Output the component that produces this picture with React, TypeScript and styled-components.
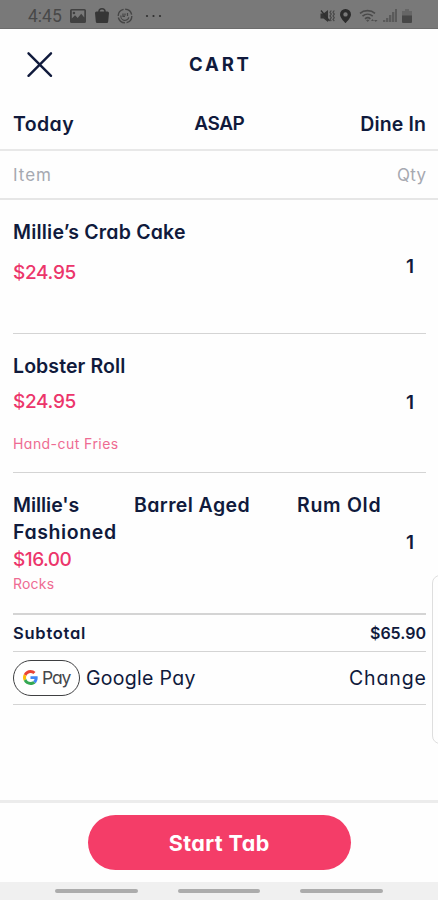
import React from 'react';
import styled, { createGlobalStyle } from 'styled-components';

const GlobalStyle = createGlobalStyle`
  * { box-sizing: border-box; }
  body { margin: 0; background: #fefefe; }
`;

const navy = '#101a3c';
const pink = '#ec356b';

const Screen = styled.div`
  position: relative;
  width: 438px;
  height: 900px;
  display: flex;
  flex-direction: column;
  overflow: hidden;
  background: #fefefe;
  color: ${navy};
  font-family: Inter, 'Open Sans', sans-serif;
  font-feature-settings: 'cv11';
`;

const StatusBar = styled.div`
  height: 29px;
  flex: none;
  display: flex;
  align-items: center;
  justify-content: space-between;
  padding: 3px 26px 0 28px;
  background: #797979;
  border-bottom: 1px solid #6c6c6c;
`;

const StatusGroup = styled.div<{ $gap: number }>`
  display: flex;
  align-items: center;
  gap: ${p => p.$gap}px;
`;

const Clock = styled.span`
  width: 34px;
  color: #484848;
  font: 400 17.5px/20px Roboto, sans-serif;
  white-space: nowrap;
`;

const Icon = styled.svg<{ $after?: number }>`
  display: block;
  flex: none;
  margin-right: ${p => p.$after ?? 0}px;
`;

const Label = styled.span<{ $size?: number; $weight?: number; $spacing?: number; $line?: number; $color?: string }>`
  display: block;
  white-space: nowrap;
  font-size: ${p => p.$size ?? 19.5}px;
  font-weight: ${p => p.$weight ?? 570};
  letter-spacing: ${p => p.$spacing ?? 0}px;
  margin-right: ${p => -(p.$spacing ?? 0)}px;
  line-height: ${p => p.$line ?? 28}px;
  color: ${p => p.$color ?? 'inherit'};
`;

const Header = styled.header`
  height: 70px;
  flex: none;
  display: grid;
  grid-template-columns: 1fr auto 1fr;
  align-items: center;
  padding: 0 26px;
`;

const CloseButton = styled.button`
  width: 27px;
  height: 27px;
  padding: 0;
  border: 0;
  background: none;
`;

const Tabs = styled.nav`
  height: 52px;
  flex: none;
  display: grid;
  grid-template-columns: 1fr auto 1fr;
  padding: 11px 12px 0 13px;
  border-bottom: 2px solid #e8e8e8;
  > :last-child { justify-self: end; }
`;

const ColumnHead = styled.div`
  height: 49px;
  flex: none;
  display: flex;
  justify-content: space-between;
  padding: 10px 12px 0 13px;
  border-bottom: 2px solid #e6e6e6;
`;

const Content = styled.main`
  flex: 1;
  padding: 0 12px 0 13px;
`;

const Item = styled.section<{ $height: number; $top: number; $rule?: number }>`
  height: ${p => p.$height}px;
  padding-top: ${p => p.$top}px;
  display: flex;
  justify-content: space-between;
  border-bottom: ${p => p.$rule ?? 1}px solid #d4d4d4;
`;

const Details = styled.div`
  display: flex;
  flex-direction: column;
`;

const NameRow = styled.div`
  display: flex;
`;

const NamePart = styled.div<{ $width: number }>`
  width: ${p => p.$width}px;
`;

const Price = styled(Label)<{ $top: number }>`
  margin-top: ${p => p.$top}px;
  font-size: 19px;
  font-weight: 470;
  color: ${pink};
`;

const Modifier = styled(Label)<{ $top: number }>`
  margin-top: ${p => p.$top}px;
  font-size: 14px;
  font-weight: 400;
  line-height: 20px;
  color: #ee6b92;
`;

const Quantity = styled(Label)<{ $top: number }>`
  margin: ${p => p.$top}px 12px 0 0;
  font-size: 19px;
`;

const SummaryRow = styled.div<{ $height: number }>`
  height: ${p => p.$height}px;
  display: flex;
  align-items: center;
  justify-content: space-between;
  padding-bottom: 1px;
  border-bottom: 1px solid #d4d4d4;
`;

const Payment = styled.div`
  display: flex;
  align-items: center;
  gap: 6px;
`;

const PayBadge = styled.div`
  width: 67px;
  height: 36px;
  display: flex;
  align-items: center;
  gap: 4px;
  padding-left: 9px;
  border: 1.3px solid #3f4042;
  border-radius: 18px;
  background: #fff;
`;

const Footer = styled.footer`
  height: 82px;
  flex: none;
  display: flex;
  justify-content: center;
  padding-top: 12px;
  border-top: 3px solid #ececec;
`;

const StartButton = styled.button`
  width: 263px;
  height: 55px;
  display: flex;
  align-items: center;
  justify-content: center;
  padding: 0;
  border: 0;
  border-radius: 28px;
  background: #f43d68;
  color: #fff;
  font-family: inherit;
  font-feature-settings: inherit;
`;

const NavBar = styled.div`
  height: 18px;
  flex: none;
  display: flex;
  justify-content: center;
  gap: 40px;
  padding-top: 7px;
  background: #f0f0f0;
`;

const NavHandle = styled.span`
  width: 82.5px;
  height: 4px;
  border-radius: 2px;
  background: #acacac;
`;

const EdgePanel = styled.aside`
  position: absolute;
  top: 575px;
  right: -12px;
  width: 18px;
  height: 169px;
  border: 1.5px solid #dedede;
  border-radius: 8px;
  background: #fefefe;
`;

export default function App() {
  return (
    <>
      <GlobalStyle />
      <Screen>
        <StatusBar>
          <StatusGroup $gap={8}>
            <Clock>4:45</Clock>
            <Icon width="16" height="14" viewBox="0 0 15 14" preserveAspectRatio="none" $after={1}>
              <path fill="#414141" fillRule="evenodd" d="M1.500 0h12A1.500 1.500 0 0 1 15 1.500v11a1.500 1.500 0 0 1-1.500 1.500h-12A1.500 1.500 0 0 1 0 12.500v-11A1.500 1.500 0 0 1 1.500 0ZM1.700 1.600v8l3-3.400 2.500 2.700 3.300-4.200 2.900 3.800V1.600ZM3.700 2.800a1.200 1.200 0 1 1 0 2.400 1.200 1.200 0 0 1 0-2.400Z" />
            </Icon>
            <Icon width="14" height="15" viewBox="0 0 14 15">
              <path fill="none" stroke="#3a3a3a" strokeWidth="1.600" d="M4 5V3.500a3 2.700 0 0 1 6 0V5" />
              <path fill="#363636" d="M1.500 3.500h11A1.500 1.500 0 0 1 14 5l-.8 8.500A1.500 1.500 0 0 1 11.700 15H2.300a1.500 1.500 0 0 1-1.500-1.500L0 5a1.500 1.500 0 0 1 1.500-1.500Z" />
            </Icon>
            <Icon width="16" height="16" viewBox="0 0 16 16" fill="none" stroke="#454545" $after={4}>
              <circle cx="8" cy="8" r="6.800" strokeWidth="1.400" strokeDasharray="9 1.680" />
              <path strokeWidth="1.200" d="M4 7.500a4 4 0 0 0 7.800 1.800M6 5.500v2.800h2M8 5.500v2M10.500 5v3" />
            </Icon>
            <Icon width="17" height="4" viewBox="0 0 17 4" fill="#303030">
              <circle cx="2" cy="2" r="1.100" /><circle cx="8.500" cy="2" r="1.100" /><circle cx="15" cy="2" r="1.100" />
            </Icon>
          </StatusGroup>
          <StatusGroup $gap={5}>
            <Icon width="15" height="14" viewBox="0 0 15 14">
              <path fill="#353535" d="M.5 4.500h3L8 1v12L3.500 9.500h-3Z" />
              <path stroke="#303030" strokeWidth="1.300" fill="none" d="M1 1.500 9.500 12" />
              <path stroke="#484848" strokeWidth="1.200" fill="none" d="m11.300 1.500-1.300 1.800 1.300 1.800-1.300 1.800 1.300 1.800-1.300 1.800 1.300 1.500M14.300 1.500 13 3.300l1.300 1.800L13 6.900l1.300 1.800-1.300 1.800 1.300 1.500" />
            </Icon>
            <Icon width="11" height="14" viewBox="0 0 11 14" $after={3}>
              <path fill="#2c2c2c" fillRule="evenodd" d="M5.500 0A5.400 5.400 0 0 1 11 5.400C11 9 5.500 14 5.500 14S0 9 0 5.400A5.400 5.400 0 0 1 5.500 0Zm0 3.200a2.200 2.200 0 1 0 0 4.400 2.200 2.200 0 0 0 0-4.400Z" />
            </Icon>
            <Icon width="19" height="14" viewBox="0 0 19 14">
              <path fill="none" stroke="#4a4a4a" strokeWidth="1.600" d="M1 4.300c4-3.600 11-3.600 15 0M3.500 7.200c3-2.600 7.200-2.600 10.200 0M6 9.800c1.800-1.500 3.600-1.500 5.400 0" />
              <path fill="#505050" d="m8.700 13 1.600-1.700a2.300 2.300 0 0 0-3.200 0ZM12 12l1.500-2 1.500 2ZM15 11h3.500l-1.700 2Z" />
            </Icon>
            <Icon width="14" height="13" viewBox="0 0 14 13" fill="#5a5a5a">
              <path d="M0 11h2.300v2H0ZM3 9h2.300v4H3ZM6 6h2.300v7H6ZM9 3h2.300v10H9ZM12 0h2v13h-2Z" />
            </Icon>
            <Icon width="10" height="14" viewBox="0 0 10 14">
              <path fill="#666" d="M3 0h4v2h3v5H0V2h3Z" />
              <path fill="#474747" d="M0 6.500h10V13a1 1 0 0 1-1 1H1a1 1 0 0 1-1-1Z" />
            </Icon>
          </StatusGroup>
        </StatusBar>

        <Header>
          <CloseButton aria-label="Close">
            <Icon width="27" height="27" viewBox="0 0 27 27">
              <path d="m2.500 2.300 22.500 22.500M25 2.300 2.500 24.800" stroke={navy} strokeWidth="2.400" strokeLinecap="round" />
            </Icon>
          </CloseButton>
          <Label $size={18.5} $weight={700} $spacing={2.8}>CART</Label>
        </Header>

        <Tabs>
          <Label $spacing={0.4}>Today</Label>
          <Label $size={19} $spacing={-0.4}>ASAP</Label>
          <Label $spacing={0.15}>Dine In</Label>
        </Tabs>

        <ColumnHead>
          <Label $size={17} $weight={400} $spacing={1} $color="#a6a9b1">Item</Label>
          <Label $size={17} $weight={400} $spacing={0.3} $color="#a6a9b1">Qty</Label>
        </ColumnHead>

        <Content>
          <Item $height={134} $top={18}>
            <Details>
              <Label $spacing={0.2}>Millie’s Crab Cake</Label>
              <Price $top={13} $spacing={-0.3}>$24.95</Price>
            </Details>
            <Quantity $top={35} $weight={600}>1</Quantity>
          </Item>
          <Item $height={139} $top={18}>
            <Details>
              <Label $spacing={0.1}>Lobster Roll</Label>
              <Price $top={8} $spacing={-0.3}>$24.95</Price>
              <Modifier $top={18} $spacing={0.45}>Hand-cut Fries</Modifier>
            </Details>
            <Quantity $top={37} $weight={600}>1</Quantity>
          </Item>
          <Item $height={142} $top={19} $rule={2}>
            <Details>
              <NameRow>
                <NamePart $width={121}>
                  <Label $spacing={-0.05} $line={27}>Millie's</Label>
                  <Label $spacing={0.6} $line={27}>Fashioned</Label>
                </NamePart>
                <NamePart $width={163}>
                  <Label $spacing={0.4} $line={27}>Barrel Aged</Label>
                </NamePart>
                <Label $spacing={0.7} $line={27}>Rum Old</Label>
              </NameRow>
              <Price $top={0} $spacing={-0.5}>$16.00</Price>
              <Modifier $top={0} $spacing={0.2}>Rocks</Modifier>
            </Details>
            <Quantity $top={37} $weight={600}>1</Quantity>
          </Item>
          <SummaryRow $height={37}>
            <Label $size={16.5} $weight={560} $spacing={0.75}>Subtotal</Label>
            <Label $size={16} $weight={560} $spacing={0}>$65.90</Label>
          </SummaryRow>
          <SummaryRow $height={53}>
            <Payment>
              <PayBadge>
                <Icon width="15" height="15" viewBox="0 0 48 48">
                  <path fill="#EA4335" d="M24 9.500c3.540 0 6.710 1.220 9.210 3.600l6.850-6.850C35.900 2.380 30.470 0 24 0 14.620 0 6.510 5.380 2.560 13.220l7.980 6.190C12.430 13.720 17.740 9.500 24 9.500z" />
                  <path fill="#4285F4" d="M46.980 24.550c0-1.570-.15-3.090-.38-4.550H24v9.020h12.940c-.58 2.960-2.260 5.480-4.780 7.180l7.730 6c4.510-4.180 7.090-10.360 7.090-17.650z" />
                  <path fill="#FBBC05" d="M10.530 28.590c-.48-1.450-.76-2.990-.76-4.590s.27-3.140.76-4.590l-7.980-6.190C.92 16.460 0 20.120 0 24c0 3.880.92 7.540 2.560 10.780l7.970-6.190z" />
                  <path fill="#34A853" d="M24 48c6.480 0 11.930-2.130 15.890-5.810l-7.730-6c-2.150 1.450-4.920 2.300-8.160 2.300-6.260 0-11.570-4.220-13.470-9.910l-7.980 6.190C6.510 42.620 14.620 48 24 48z" />
                </Icon>
                <Label $size={17.5} $weight={400} $spacing={-1.2} $color="#46484c">Pay</Label>
              </PayBadge>
              <Label $weight={440} $spacing={0.3}>Google Pay</Label>
            </Payment>
            <Label $weight={440} $spacing={0.9}>Change</Label>
          </SummaryRow>
        </Content>

        <Footer>
          <StartButton>
            <Label $size={21.5} $weight={700} $spacing={0.4}>Start Tab</Label>
          </StartButton>
        </Footer>
        <NavBar>
          <NavHandle />
          <NavHandle />
          <NavHandle />
        </NavBar>
        <EdgePanel />
      </Screen>
    </>
  );
}
